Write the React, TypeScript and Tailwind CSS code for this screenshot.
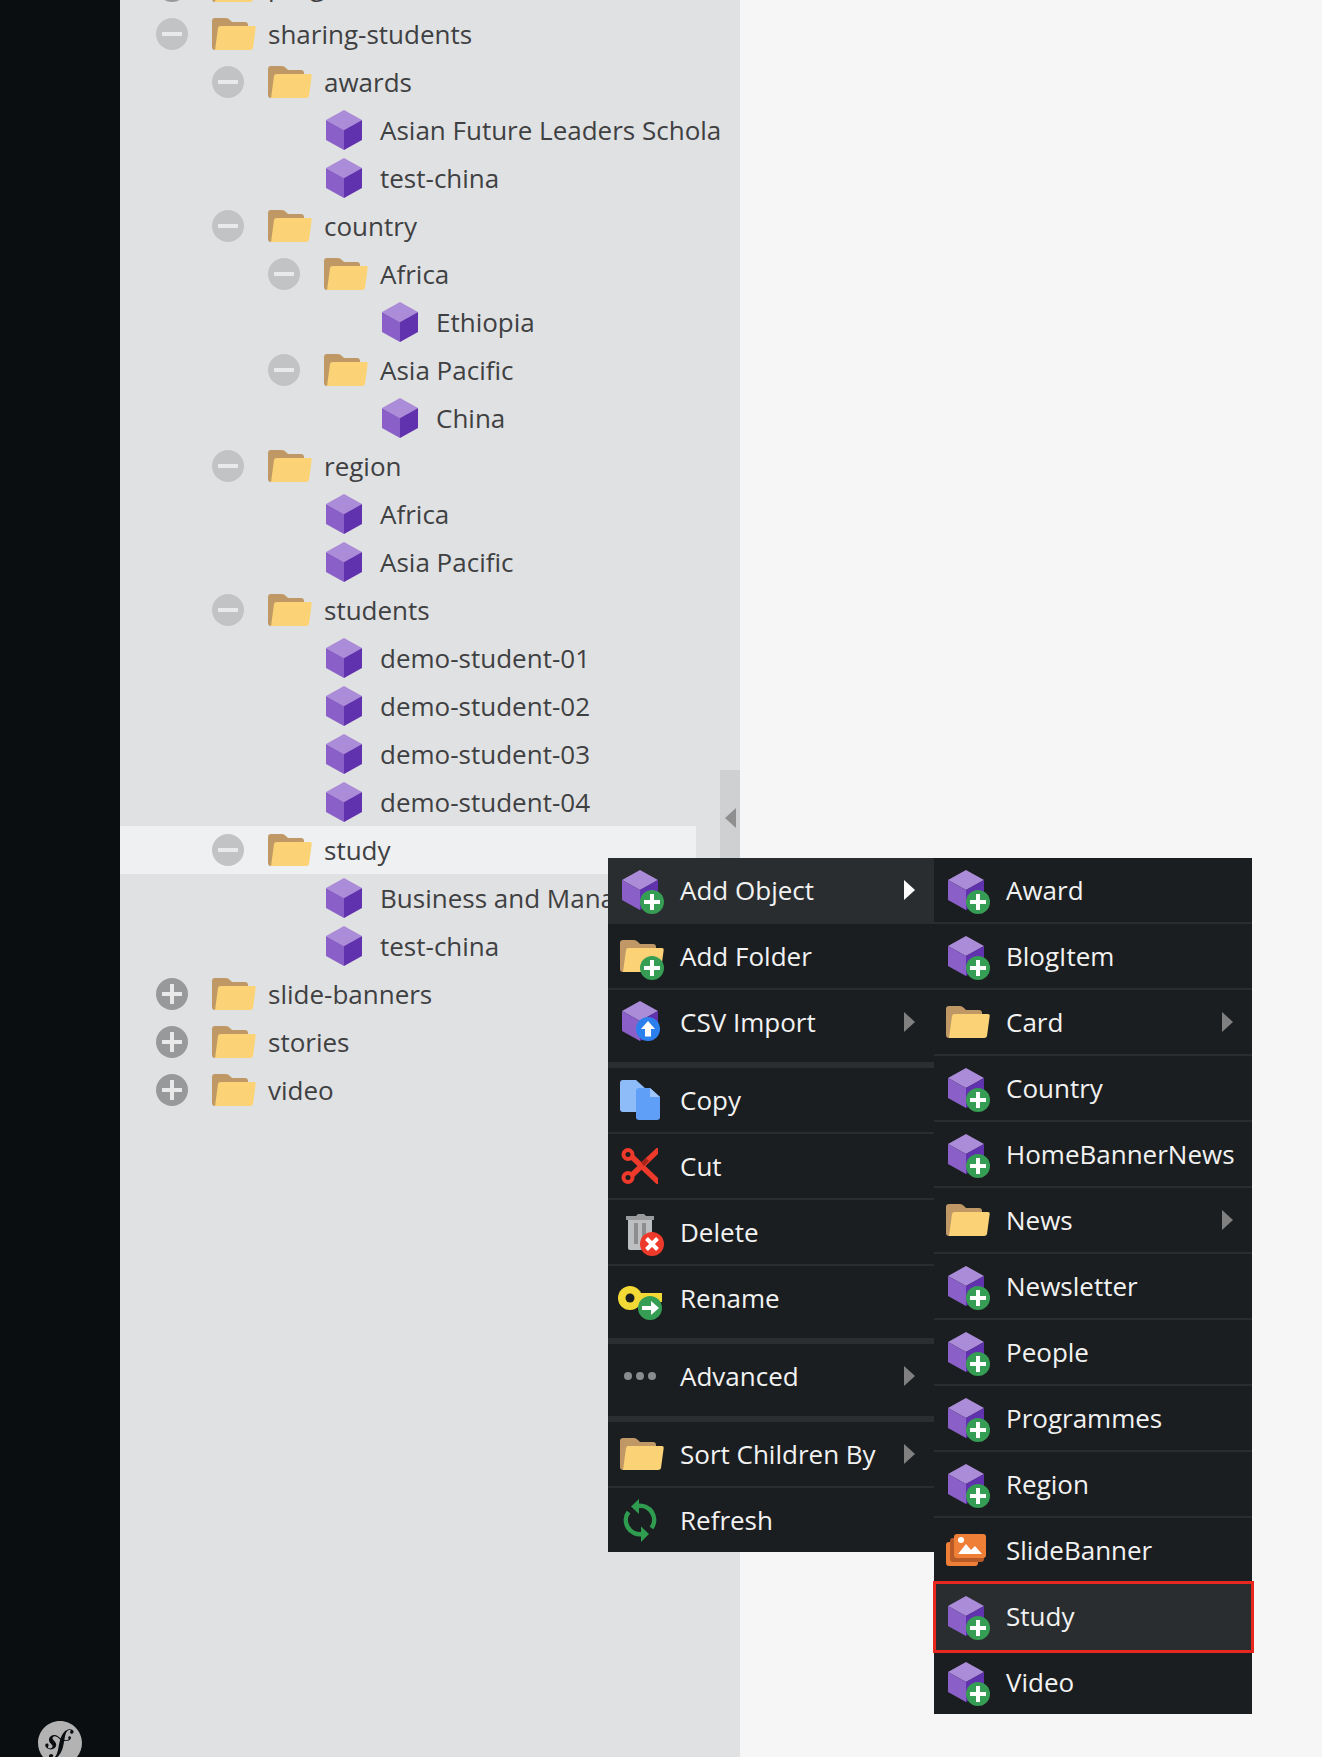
import { SiSymfony } from "react-icons/si";

type TreeRow = {
  level: number;
  label: string;
  kind: "folder" | "object";
  toggle?: "minus" | "plus";
  active?: boolean;
};

const indents = ["pl-[36px]", "pl-[92px]", "pl-[148px]", "pl-[204px]"];

const treeRows: TreeRow[] = [
  { level: 0, label: "programmes", kind: "folder", toggle: "plus" },
  { level: 0, label: "sharing-students", kind: "folder", toggle: "minus" },
  { level: 1, label: "awards", kind: "folder", toggle: "minus" },
  { level: 2, label: "Asian Future Leaders Scholarship", kind: "object" },
  { level: 2, label: "test-china", kind: "object" },
  { level: 1, label: "country", kind: "folder", toggle: "minus" },
  { level: 2, label: "Africa", kind: "folder", toggle: "minus" },
  { level: 3, label: "Ethiopia", kind: "object" },
  { level: 2, label: "Asia Pacific", kind: "folder", toggle: "minus" },
  { level: 3, label: "China", kind: "object" },
  { level: 1, label: "region", kind: "folder", toggle: "minus" },
  { level: 2, label: "Africa", kind: "object" },
  { level: 2, label: "Asia Pacific", kind: "object" },
  { level: 1, label: "students", kind: "folder", toggle: "minus" },
  { level: 2, label: "demo-student-01", kind: "object" },
  { level: 2, label: "demo-student-02", kind: "object" },
  { level: 2, label: "demo-student-03", kind: "object" },
  { level: 2, label: "demo-student-04", kind: "object" },
  { level: 1, label: "study", kind: "folder", toggle: "minus", active: true },
  { level: 2, label: "Business and Management", kind: "object" },
  { level: 2, label: "test-china", kind: "object" },
  { level: 0, label: "slide-banners", kind: "folder", toggle: "plus" },
  { level: 0, label: "stories", kind: "folder", toggle: "plus" },
  { level: 0, label: "video", kind: "folder", toggle: "plus" },
];

function CubeShape({ x = 0, y = 0 }: { x?: number; y?: number }) {
  return (
    <g transform={`translate(${x} ${y})`}>
      <path d="M18 0 36 10 18 20 0 10Z" fill="#ab8cd8" />
      <path d="M0 10 18 20V40L0 30Z" fill="#8a60c8" />
      <path d="M36 10V30L18 40V20Z" fill="#6132ae" />
    </g>
  );
}

function FolderShape({ x = 0, y = 0 }: { x?: number; y?: number }) {
  return (
    <g transform={`translate(${x} ${y})`}>
      <path
        d="M3 0H14Q16 0 18 2L20 4H33Q36 4 36 7V12L6 32H3Q0 32 0 29V3Q0 0 3 0Z"
        fill="#bf9866"
      />
      <path
        d="M8.5 8H42Q44 8 43.7 10L41 30Q40.7 32 38 32H3L6 10Q6.3 8 8.5 8Z"
        fill="#fbd276"
      />
    </g>
  );
}

function PlusBadge({ cx = 32, cy = 36 }: { cx?: number; cy?: number }) {
  return (
    <g>
      <circle cx={cx} cy={cy} r="12" fill="#369e54" />
      <path d={`M${cx - 8} ${cy}H${cx + 8}M${cx} ${cy - 8}V${cy + 8}`} stroke="#fff" strokeWidth="4" />
    </g>
  );
}

function Icon48({ children }: { children: React.ReactNode }) {
  return (
    <svg width="48" height="48" viewBox="0 0 48 48" className="shrink-0 overflow-visible">
      {children}
    </svg>
  );
}

function AddObjectIcon() {
  return (
    <Icon48>
      <CubeShape x={2} y={4} />
      <PlusBadge />
    </Icon48>
  );
}

function FolderIcon() {
  return (
    <Icon48>
      <FolderShape y={8} />
    </Icon48>
  );
}

function AddFolderIcon() {
  return (
    <Icon48>
      <FolderShape y={8} />
      <PlusBadge />
    </Icon48>
  );
}

function CsvIcon() {
  return (
    <Icon48>
      <CubeShape x={2} y={3} />
      <circle cx="28" cy="31" r="12" fill="#2c80ee" />
      <path d="M28 23 35 31H31V38.5H25V31H21Z" fill="#fff" />
    </Icon48>
  );
}

function CopyIcon() {
  return (
    <Icon48>
      <path d="M3 4H16L26 13V34Q26 36 24 36H3Q0 36 0 33V7Q0 4 3 4Z" fill="#8dbcf9" />
      <path d="M19 12H30L40 21V41Q40 44 37 44H19Q16 44 16 41V15Q16 12 19 12Z" fill="#5f9ff8" />
      <path d="M30 12 40 21H30Z" fill="#9fc5f9" />
    </Icon48>
  );
}

function CutIcon() {
  return (
    <Icon48>
      <path d="M10 17 14 13 38 36V42H36.5Z" fill="#ee3a2b" />
      <path d="M10 31 14 35 38 12V6H36.5Z" fill="#ee3a2b" />
      <path d="M21 20.5 26 16 29 19 24 24Z" fill="#a5241c" />
      <circle cx="8" cy="12.5" r="4.5" fill="none" stroke="#ee3a2b" strokeWidth="4" />
      <circle cx="8" cy="35.5" r="4.5" fill="none" stroke="#ee3a2b" strokeWidth="4" />
    </Icon48>
  );
}

function DeleteIcon() {
  return (
    <Icon48>
      <path d="M6 8H16L18 6H24L26 8H34V12H6Z" fill="#9a9b9d" />
      <path d="M8 12H32V40Q32 42 30 42H10Q8 42 8 40Z" fill="#bdbec0" />
      <path d="M14 15H18V36H14ZM22 15H26V36H22Z" fill="#8c8d8f" />
      <circle cx="32" cy="36" r="12" fill="#ee3a2b" />
      <path d="M26.5 30.5 37.5 41.5M37.5 30.5 26.5 41.5" stroke="#fff" strokeWidth="4" />
    </Icon48>
  );
}

function RenameIcon() {
  return (
    <Icon48>
      <path d="M10 19H42V28H10Z" fill="#f2d936" />
      <circle cx="10" cy="24" r="12" fill="#f2d936" />
      <circle cx="10" cy="24" r="4.5" fill="#1b1e21" />
      <circle cx="30" cy="34" r="12" fill="#369e54" />
      <path d="M22 34H33" stroke="#fff" strokeWidth="4" />
      <path d="M31 27 39 34 31 41Z" fill="#fff" />
    </Icon48>
  );
}

function AdvancedIcon() {
  return (
    <Icon48>
      <circle cx="8" cy="24" r="4" fill="#8a8b8d" />
      <circle cx="20" cy="24" r="4" fill="#8a8b8d" />
      <circle cx="32" cy="24" r="4" fill="#8a8b8d" />
    </Icon48>
  );
}

function RefreshIcon() {
  return (
    <Icon48>
      <path d="M18 10A14 14 0 0 1 31.5 32" fill="none" stroke="#2f9c50" strokeWidth="4.5" />
      <path d="M22 38A14 14 0 0 1 8.5 16" fill="none" stroke="#2f9c50" strokeWidth="4.5" />
      <path d="M19 3 11 10.5 19 18Z" fill="#2f9c50" />
      <path d="M21 30.5 29 38 21 46Z" fill="#2f9c50" />
    </Icon48>
  );
}

function SlideBannerIcon() {
  return (
    <Icon48>
      <rect x="0" y="16" width="32" height="24" rx="3" fill="#ef7e37" />
      <rect x="4" y="12" width="34" height="24" rx="3" fill="#b85a28" />
      <rect x="8" y="8" width="32" height="24" rx="3" fill="#ef7e37" />
      <circle cx="15" cy="14" r="3" fill="#fff" />
      <path d="M12 28 20 18 25 24 29 20 36 28Z" fill="#fff" />
    </Icon48>
  );
}

function Arrow({ tone }: { tone: "white" | "gray" }) {
  return (
    <svg width="11" height="20" viewBox="0 0 11 20" className="shrink-0">
      <path d="M0 0 11 10 0 20Z" fill={tone === "white" ? "#ffffff" : "#808080"} />
    </svg>
  );
}

function TreeLine({ row }: { row: TreeRow }) {
  return (
    <div
      className={`flex h-12 items-center whitespace-nowrap ${indents[row.level]} ${row.active ? "bg-[#eff0f2]" : ""}`}
    >
      <div className="flex w-14 shrink-0 items-center">
        {row.toggle === "minus" && (
          <svg width="32" height="32" viewBox="0 0 32 32">
            <circle cx="16" cy="16" r="16" fill="#c2c3c5" />
            <rect x="6" y="14" width="20" height="4" fill="#e9e9ea" />
          </svg>
        )}
        {row.toggle === "plus" && (
          <svg width="32" height="32" viewBox="0 0 32 32">
            <circle cx="16" cy="16" r="16" fill="#98999b" />
            <path d="M6 16H26M16 6V26" stroke="#e9e9ea" strokeWidth="4" />
          </svg>
        )}
      </div>
      <div className="flex w-14 shrink-0 items-center">
        {row.kind === "folder" ? (
          <svg width="44" height="32" viewBox="0 0 44 32">
            <FolderShape />
          </svg>
        ) : (
          <svg width="40" height="40" viewBox="0 0 40 40">
            <CubeShape x={2} />
          </svg>
        )}
      </div>
      <span className="text-[26px] text-[#3f4042]">{row.label}</span>
    </div>
  );
}

function MenuRow({
  icon,
  label,
  arrow,
  active,
  line,
}: {
  icon: React.ReactNode;
  label: string;
  arrow?: "white" | "gray";
  active?: boolean;
  line?: boolean;
}) {
  return (
    <div
      className={`flex h-16 box-content items-center gap-3 pl-3 pr-[19px] text-[26px] text-[#f2f2f2] ${active ? "bg-[#2a2d30]" : ""} ${line ? "border-b-2 border-[#2a2d30]" : ""}`}
    >
      {icon}
      <span className="flex-1 whitespace-nowrap">{label}</span>
      {arrow && <Arrow tone={arrow} />}
    </div>
  );
}

function Separator() {
  return <div className="mt-2 h-1.5 bg-[#2a2e31]" />;
}

const subItems = [
  { label: "Award", icon: <AddObjectIcon /> },
  { label: "BlogItem", icon: <AddObjectIcon /> },
  { label: "Card", icon: <FolderIcon />, arrow: true },
  { label: "Country", icon: <AddObjectIcon /> },
  { label: "HomeBannerNews", icon: <AddObjectIcon /> },
  { label: "News", icon: <FolderIcon />, arrow: true },
  { label: "Newsletter", icon: <AddObjectIcon /> },
  { label: "People", icon: <AddObjectIcon /> },
  { label: "Programmes", icon: <AddObjectIcon /> },
  { label: "Region", icon: <AddObjectIcon /> },
  { label: "SlideBanner", icon: <SlideBannerIcon /> },
  { label: "Study", icon: <AddObjectIcon />, active: true },
  { label: "Video", icon: <AddObjectIcon /> },
];

export default function App() {
  return (
    <div className="relative flex h-[1757px] overflow-hidden bg-[#f6f6f6] font-['Open_Sans',sans-serif]">
      <aside className="relative w-[120px] shrink-0 bg-[#0a0e11]">
        <SiSymfony className="absolute left-[38px] top-[1721px] h-11 w-11 text-[#b3b3b3]" />
      </aside>

      <div className="relative h-full w-[620px] shrink-0 overflow-hidden bg-[#e0e1e3]">
        <div className="-mt-[38px] w-[576px]">
          {treeRows.map((row, index) => (
            <TreeLine key={index} row={row} />
          ))}
        </div>
        <div className="absolute right-0 top-0 h-full w-5 bg-[#e0e1e3]" />
        <div className="absolute right-0 top-[770px] flex h-24 w-5 items-center justify-start bg-[#cfd0d2] pl-[5px]">
          <svg width="11" height="20" viewBox="0 0 11 20">
            <path d="M11 0 0 10 11 20Z" fill="#8f8f8f" />
          </svg>
        </div>
      </div>

      <div className="absolute left-[608px] top-[858px] w-[326px] bg-[#1b1e21]">
        <MenuRow icon={<AddObjectIcon />} label="Add Object" arrow="white" active line />
        <MenuRow icon={<AddFolderIcon />} label="Add Folder" line />
        <MenuRow icon={<CsvIcon />} label="CSV Import" arrow="gray" />
        <Separator />
        <MenuRow icon={<CopyIcon />} label="Copy" line />
        <MenuRow icon={<CutIcon />} label="Cut" line />
        <MenuRow icon={<DeleteIcon />} label="Delete" line />
        <MenuRow icon={<RenameIcon />} label="Rename" />
        <Separator />
        <MenuRow icon={<AdvancedIcon />} label="Advanced" arrow="gray" />
        <Separator />
        <MenuRow icon={<FolderIcon />} label="Sort Children By" arrow="gray" line />
        <MenuRow icon={<RefreshIcon />} label="Refresh" />
      </div>

      <div className="absolute left-[934px] top-[858px] w-[318px] bg-[#1b1e21]">
        {subItems.map((item, index) => (
          <MenuRow
            key={item.label}
            icon={item.icon}
            label={item.label}
            arrow={item.arrow ? "gray" : undefined}
            active={item.active}
            line={index < subItems.length - 1}
          />
        ))}
        <div className="absolute -left-px -right-0.5 top-[723px] h-[72px] border-[3px] border-[#e8281e]" />
      </div>
    </div>
  );
}
